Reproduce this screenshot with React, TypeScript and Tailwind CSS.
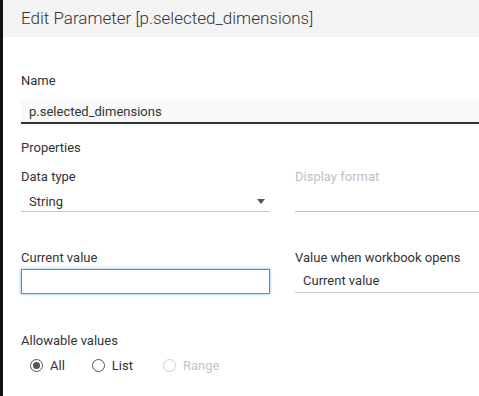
import React from 'react';

const Radio: React.FC<{ label: string; checked?: boolean; disabled?: boolean; className?: string }> = ({ label, checked, disabled, className }) => (
  <label className={`flex items-center gap-[7px] text-[13px] ${disabled ? 'text-[#c4c4c4]' : 'text-[#333]'} ${className ?? ''}`}>
    <span className={`flex items-center justify-center w-[13px] h-[13px] rounded-full border ${disabled ? 'border-[#cfcfcf]' : 'border-[#555]'}`}>
      {checked && <span className="w-[7px] h-[7px] rounded-full bg-[#555]"></span>}
    </span>
    {label}
  </label>
);

export default function App() {
  return (
    <div className="w-[479px] h-[396px] bg-white border-l-[3px] border-[#111] overflow-hidden text-[#333]" style={{ fontFamily: 'Roboto, "Open Sans", sans-serif' }}>
      {/* header */}
      <div className="h-[37px] bg-[#f4f4f4] flex items-center pl-[18px]">
        <span className="text-[17px] font-light text-[#333]">Edit Parameter [p.selected_dimensions]</span>
      </div>

      <div className="pl-[18px]">
        {/* name */}
        <div className="pt-[35px] text-[13px] leading-[17px]">Name</div>
        <div className="mt-[10px] h-[25px] bg-[#f9f9f9] border-b-2 border-[#333] flex items-center pl-[8px] pt-[2px] text-[13px]">p.selected_dimensions</div>

        <div className="mt-[15px] text-[13px] leading-[17px]">Properties</div>

        {/* data type / display format */}
        <div className="mt-[12px] flex gap-[25px]">
          <div className="w-[249px] shrink-0">
            <div className="text-[13px] leading-[17px]">Data type</div>
            <div className="mt-[7px] h-[20px] border-b border-[#c8c8c8] flex items-center justify-between pl-[8px] pr-[5px] text-[13px]">
              <span>String</span>
              <span className="w-0 h-0 border-l-[4px] border-r-[4px] border-t-[5px] border-l-transparent border-r-transparent border-t-[#555]"></span>
            </div>
          </div>
          <div className="flex-1">
            <div className="text-[13px] leading-[17px] text-[#c0c0c0]">Display format</div>
            <div className="mt-[7px] h-[20px] border-b border-[#bdbdbd]"></div>
          </div>
        </div>

        {/* current value / value when opens */}
        <div className="mt-[37px] flex gap-[25px]">
          <div className="w-[249px] shrink-0">
            <div className="text-[13px] leading-[17px]">Current value</div>
            <div className="mt-[3px] h-[25px] border border-[#3d95dc] shadow-[0_0_3px_#7ab8ec]"></div>
          </div>
          <div className="flex-1">
            <div className="text-[13px] leading-[17px]">Value when workbook opens</div>
            <div className="mt-[4px] h-[23px] border-b border-[#c8c8c8] flex items-center pl-[8px] text-[13px]">Current value</div>
          </div>
        </div>

        {/* allowable values */}
        <div className="mt-[38px] text-[13px] leading-[17px]">Allowable values</div>
        <div className="mt-[7px] flex items-center gap-[27px] pl-[9px]">
          <Radio label="All" checked />
          <Radio label="List" />
          <Radio label="Range" disabled className="ml-[3px]" />
        </div>
      </div>
    </div>
  );
}
